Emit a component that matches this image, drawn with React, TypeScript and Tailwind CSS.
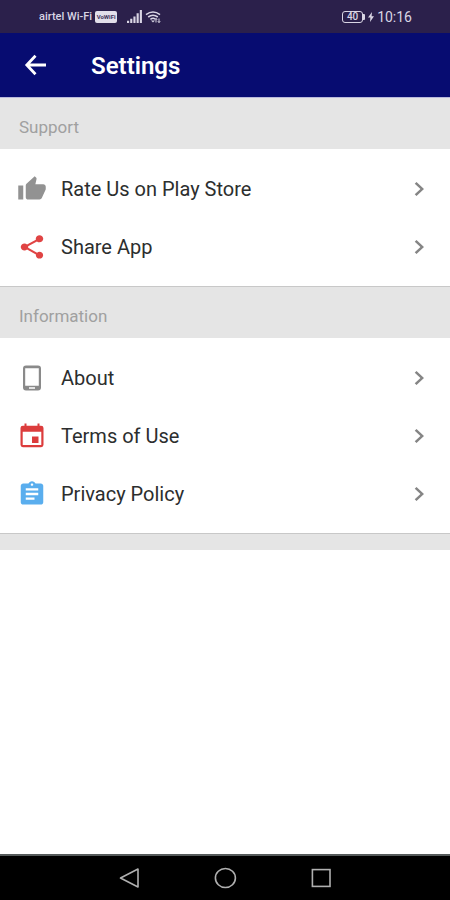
import type { ReactNode, SVGProps } from "react"
import { MdAssignment, MdChevronRight, MdShare, MdThumbUp } from "react-icons/md"

const BackIcon = (props: SVGProps<SVGSVGElement>) => (
  <svg viewBox="0 0 31 30" fill="none" stroke="currentColor" strokeWidth="2.8" {...props}>
    <path d="M26 15H7M15.500 5.800 6.800 15l8.700 9.200" />
  </svg>
)

const PhoneIcon = (props: SVGProps<SVGSVGElement>) => (
  <svg viewBox="0 0 30 28" fill="currentColor" {...props}>
    <path
      fillRule="evenodd"
      d="M9 1.500h12a3 3 0 0 1 3 3v19a3 3 0 0 1-3 3H9a3 3 0 0 1-3-3v-19a3 3 0 0 1 3-3zM8.200 4.300v17.400h13.600V4.300zM12 23.200v1.500h6v-1.500z"
    />
  </svg>
)

const CalendarIcon = (props: SVGProps<SVGSVGElement>) => (
  <svg viewBox="0 0 30 28" fill="currentColor" {...props}>
    <path
      fillRule="evenodd"
      d="M7.500 1.500h2v2.200h11V1.500h2v2.200h1.600a2.400 2.400 0 0 1 2.400 2.400v16.700a2.400 2.400 0 0 1-2.400 2.400H5.900a2.400 2.400 0 0 1-2.400-2.400V6.100a2.400 2.400 0 0 1 2.400-2.400h1.600zM5.700 9.800v13.100h18.600V9.800z"
    />
    <path d="M15 14.500h6.500V21H15z" />
  </svg>
)

interface RowProps {
  icon: (props: SVGProps<SVGSVGElement>) => ReactNode
  label: string
  color: string
}

const Row = ({ icon: Icon, label, color }: RowProps) => (
  <li>
    <a href="#" className="flex h-[58px] items-center gap-[14px] pl-[17px] pr-4">
      <Icon
        className={`h-7 w-[30px] shrink-0 ${color}`}
        preserveAspectRatio="none"
      />
      <span className="flex-1 text-xl leading-6 text-[#2c2e2e]">{label}</span>
      <MdChevronRight
        className="h-7 w-[30px] shrink-0 text-[#858585]"
        preserveAspectRatio="none"
      />
    </a>
  </li>
)

interface SectionProps {
  title: string
  children: ReactNode
}

const Section = ({ title, children }: SectionProps) => (
  <section className="border-b border-[#c8c8c8]">
    <h2 className="flex h-[51px] items-center bg-[#e5e5e5] px-[19px] pt-[6px] text-[17px] leading-6 text-[#a0a0a0]">
      {title}
    </h2>
    <ul className="bg-white pb-[10px] pt-[11px]">{children}</ul>
  </section>
)

const StatusBar = () => (
  <div className="flex h-[33px] items-center justify-between bg-[#2b204b] pl-[39px] pr-[38px] text-[#d9d5e4]">
    <div className="flex items-center">
      <span className="text-[11px] font-medium leading-4">airtel Wi-Fi</span>
      <span className="ml-[3px] flex h-3 w-[22px] items-center justify-center rounded-[2px] bg-[#e2dfea] text-[6px] font-bold leading-none text-[#3b3158]">
        VoWiFi
      </span>
      <svg className="ml-[10px] h-[13px] w-4" viewBox="0 0 15 12" fill="currentColor">
        <path d="M0 10h2v2H0zM3 8h2v4H3zM6 6h2v6H6zM9 3h2v9H9zM12 0h2v12h-2z" />
      </svg>
      <svg
        className="ml-[2px] h-3 w-4"
        viewBox="0 0 16 12"
        fill="none"
        stroke="currentColor"
        strokeWidth="1.6"
      >
        <path d="M1 3.6Q8-1.6 15 3.6M3.2 6Q8 2.4 12.8 6M5.4 8.4Q8 6.4 10 8" />
        <path d="M8 11.6 6 9.4h4z" fill="currentColor" stroke="none" />
        <path d="M11 11.5V7.5M9.8 8.8 11 7.4l1.2 1.4M14 7.5v4M12.8 10.2 14 11.6l1.2-1.4" strokeWidth="1" />
      </svg>
    </div>
    <div className="flex items-center">
      <span className="flex h-3 w-[21px] items-center justify-center rounded-[3px] border border-current text-[10px] font-medium leading-none">
        40
      </span>
      <span className="h-[6px] w-[2px] rounded-r-[1px] bg-current" />
      <svg className="ml-[3px] h-[10px] w-[6px]" viewBox="0 0 6 10" fill="currentColor">
        <path d="M4 0 0 5.6h2.4L2 10l4-5.8H3.6z" />
      </svg>
      <span className="ml-[3px] text-[14px] leading-4">10:16</span>
    </div>
  </div>
)

const NavBar = () => (
  <nav className="flex h-[46px] items-center justify-center gap-[72px] border-t-2 border-[#555a5a] bg-black text-[#b0b0b0]">
    <button type="button" aria-label="Back">
      <svg className="h-6 w-6" viewBox="0 0 24 24" fill="none" stroke="currentColor" strokeWidth="1.6">
        <path d="M21 3v18L3.500 12z" strokeLinejoin="round" />
      </svg>
    </button>
    <button type="button" aria-label="Home">
      <svg className="h-6 w-6" viewBox="0 0 24 24" fill="none" stroke="currentColor" strokeWidth="1.6">
        <ellipse cx="12.400" cy="12" rx="10" ry="9.500" />
      </svg>
    </button>
    <button type="button" aria-label="Recent apps">
      <svg className="h-6 w-6" viewBox="0 0 24 24" fill="none" stroke="currentColor" strokeWidth="1.6">
        <rect x="3.400" y="3.600" width="17.600" height="16.800" />
      </svg>
    </button>
  </nav>
)

export default function App() {
  return (
    <div className="flex min-h-screen flex-col bg-white font-[Roboto,sans-serif]">
      <StatusBar />
      <header className="flex h-[65px] items-center gap-10 border-b border-[#b9b9dc] bg-[#070c71] pl-5 text-white">
        <button type="button" aria-label="Go back">
          <BackIcon className="h-[30px] w-[31px]" />
        </button>
        <h1 className="pt-[2px] text-2xl font-semibold">Settings</h1>
      </header>
      <main className="flex-1">
        <Section title="Support">
          <Row icon={MdThumbUp} label="Rate Us on Play Store" color="text-[#929292]" />
          <Row icon={MdShare} label="Share App" color="text-[#e04444]" />
        </Section>
        <Section title="Information">
          <Row icon={PhoneIcon} label="About" color="text-[#8a8a8a]" />
          <Row icon={CalendarIcon} label="Terms of Use" color="text-[#dc3c3c]" />
          <Row icon={MdAssignment} label="Privacy Policy" color="text-[#5aaeee]" />
        </Section>
        <div className="h-4 bg-[#e5e5e5]" />
      </main>
      <NavBar />
    </div>
  )
}
